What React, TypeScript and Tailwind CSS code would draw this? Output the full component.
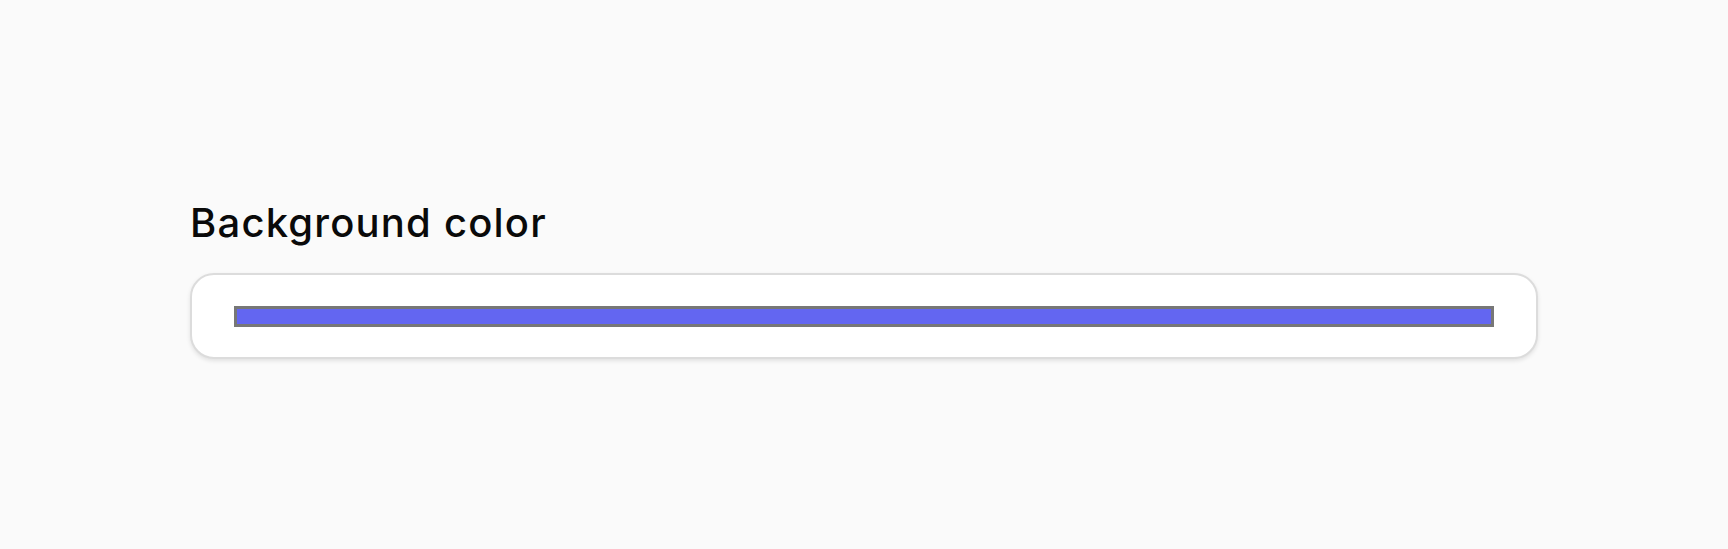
import { useState } from 'react';

export default function App() {
  const [color, setColor] = useState('#6366f1');

  return (
    <div className="flex min-h-screen items-center justify-center bg-[#fafafa] px-[190px] font-['Inter',sans-serif]">
      <div className="flex w-full flex-col gap-[26px] pt-[8px]">
        <span className="text-[40px] leading-[48px] font-medium tracking-[1.2px] text-[#0a0a0a]">Background color</span>
        <label className="flex h-[86px] cursor-pointer items-center rounded-[24px] border-2 border-[#dcdcdc] bg-white px-[42px] shadow-[0_2px_4px_rgba(0,0,0,0.1)]">
          <input
            type="color"
            value={color}
            onChange={(e) => setColor(e.target.value)}
            className="sr-only"
          />
          <div className="mt-[2px] h-[21px] w-full border-[3px] border-[#777777]" style={{ backgroundColor: color }} />
        </label>
      </div>
    </div>
  );
}
